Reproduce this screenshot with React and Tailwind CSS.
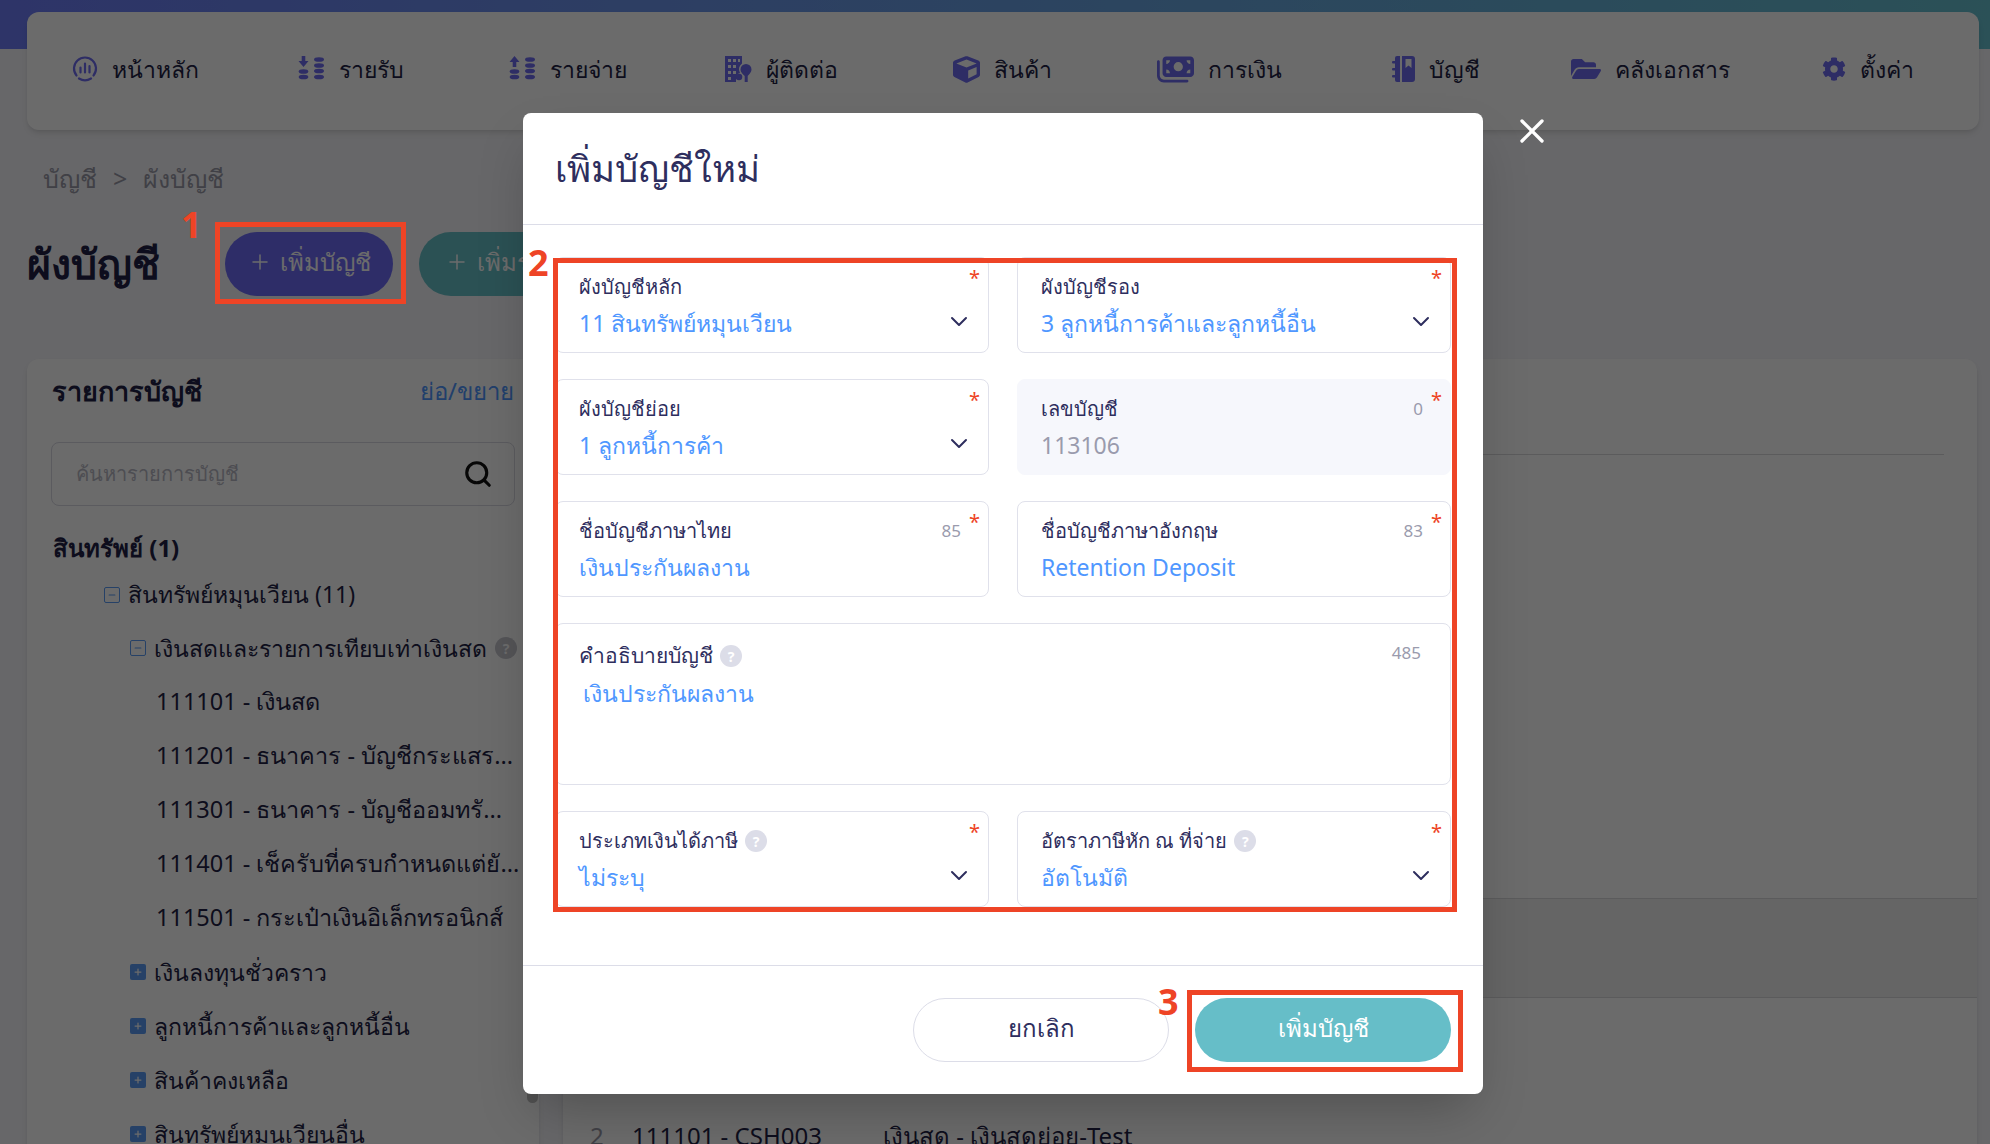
import React from 'react';
import { Search, Plus, Minus, X } from 'lucide-react';
import { FaCube, FaFolderOpen, FaCog } from 'react-icons/fa';
import { FaMoneyBills } from 'react-icons/fa6';

const HomeIcon = () => (
  <svg width="26" height="26" viewBox="0 0 26 26" fill="none" stroke="currentColor" strokeWidth="2.2" strokeLinecap="round">
    <path d="M4.500 19.500A11 11 0 1 1 21.500 19.500" />
    <path d="M7 22.500a11 11 0 0 0 12 0" />
    <path d="M8.500 11.500v5M13 7.500v9M17.500 10v6.500" />
  </svg>
);

const Coins = ({ up }) => (
  <svg width="27" height="26" viewBox="0 0 27 26" fill="currentColor">
    {up ? <path d="M5.500 0l5 6H7.300v5H3.700V6H.5z" /> : <path d="M3.700 0h3.600v5h3.200l-5 6-5-6h3.200z" />}
    {[13.500, 19].map((y, i) => <ellipse key={i} cx="5.500" cy={y + 2} rx="4.800" ry="2.300" />)}
    {[1.500, 7.500, 13, 19].map((y, i) => <ellipse key={i} cx="21" cy={y + 2} rx="5" ry="2.300" />)}
  </svg>
);

const ContactIcon = () => (
  <svg width="27" height="26" viewBox="0 0 27 26" fill="currentColor">
    <path fillRule="evenodd" d="M0 0h17v7.500a7 7 0 0 0-2 9.500 5.500 5.500 0 0 0-4 6V26H0zM3 3v3h3V3zm5 0v3h3V3zm5 0v3h2V3zM3 9v3h3V9zm5 0v3h3V9zM3 15v3h3v-3zm5 0v3h3v-3zM3 21v3h3v-3z" />
    <path d="M21 8a5.500 5.500 0 0 1 5.500 5.500c0 3-3 5.500-3.800 6.500V26h-3v-6c-1-1-4.200-3.500-4.200-6.500A5.500 5.500 0 0 1 21 8z" />
    <circle cx="14" cy="21" r="3.300" />
  </svg>
);

const BookIcon = () => (
  <svg width="23" height="26" viewBox="0 0 23 26" fill="currentColor">
    <path fillRule="evenodd" d="M3 2a2 2 0 0 1 2-2h3v26H5a2 2 0 0 1-2-2z" />
    <path fillRule="evenodd" d="M10 0h10a3 3 0 0 1 3 3v20a3 3 0 0 1-3 3H10zm3.500 3v9l3-2.500 3 2.500V3z" />
    <rect x="0" y="5" width="4" height="2.500" rx="1" />
    <rect x="0" y="12" width="4" height="2.500" rx="1" />
    <rect x="0" y="19" width="4" height="2.500" rx="1" />
  </svg>
);

const navItems = [
  { label: 'หน้าหลัก', width: 'w-[226px]', icon: <HomeIcon /> },
  { label: 'รายรับ', width: 'w-[211px]', icon: <Coins /> },
  { label: 'รายจ่าย', width: 'w-[216px]', icon: <Coins up /> },
  { label: 'ผู้ติดต่อ', width: 'w-[228px]', icon: <ContactIcon /> },
  { label: 'สินค้า', width: 'w-[204px]', icon: <FaCube size={27} /> },
  { label: 'การเงิน', width: 'w-[235px]', icon: <FaMoneyBills size={37} /> },
  { label: 'บัญชี', width: 'w-[179px]', icon: <BookIcon /> },
  { label: 'คลังเอกสาร', width: 'w-[251px]', icon: <FaFolderOpen size={30} /> },
  { label: 'ตั้งค่า', width: 'w-auto', icon: <FaCog size={24} /> },
];

const leaves = [
  '111101 - เงินสด',
  '111201 - ธนาคาร - บัญชีกระแสร...',
  '111301 - ธนาคาร - บัญชีออมทรั...',
  '111401 - เช็ครับที่ครบกำหนดแต่ยั...',
  '111501 - กระเป๋าเงินอิเล็กทรอนิกส์',
];

const closedGroups = ['เงินลงทุนชั่วคราว', 'ลูกหนี้การค้าและลูกหนี้อื่น', 'สินค้าคงเหลือ', 'สินทรัพย์หมุนเวียนอื่น'];

function TreeToggle({ open }) {
  if (open) {
    return (
      <span className="flex h-4 w-4 shrink-0 items-center justify-center rounded-[2px] border border-[#5b9cf5] text-[#5b9cf5]">
        <Minus size={10} strokeWidth={2.5} />
      </span>
    );
  }
  return (
    <span className="flex h-4 w-4 shrink-0 items-center justify-center rounded-[2px] bg-[#5b9cf5] text-white">
      <Plus size={10} strokeWidth={3} />
    </span>
  );
}

function HelpDot() {
  return (
    <span className="ml-[7px] flex h-[22px] w-[22px] shrink-0 items-center justify-center rounded-full bg-[#dcdde8] text-[14px] font-bold text-white">?</span>
  );
}

function Chevron() {
  return (
    <svg className="absolute right-[20px] top-[58px]" width="18" height="11" viewBox="0 0 18 11" fill="none" stroke="#2e2e5e" strokeWidth="2" strokeLinecap="round" strokeLinejoin="round">
      <path d="M2 2l7 7 7-7" />
    </svg>
  );
}

function Field({ label, value, help, count, select, required = true, disabled }) {
  return (
    <div className={`relative h-24 rounded-lg border px-[23px] pt-[15px] ${disabled ? 'border-[#f6f7fc] bg-[#f6f7fc]' : 'border-[#e0e1eb] bg-white'}`}>
      <div className="flex h-7 items-center text-[20px] font-medium text-[#2e2e5e]">
        {label}
        {help && <HelpDot />}
      </div>
      <div className={`mt-[4px] text-[23px] leading-9 ${disabled ? 'text-[#9a9bad]' : 'text-[#4f97ff]'}`}>{value}</div>
      {select && <Chevron />}
      {count !== undefined && <span className="absolute right-[27px] top-[17px] text-[17px] leading-6 text-[#9a9bad]">{count}</span>}
      {required && <span className="absolute right-[8px] top-[8px] text-[20px] leading-6 text-[#ee4426]">*</span>}
    </div>
  );
}

export default function App() {
  return (
    <div className="relative h-[1144px] w-full overflow-hidden bg-[#f5f5f9] font-['Noto_Sans',sans-serif] text-[#1f1f45]">
      <div className="h-[49px] bg-gradient-to-r from-[#6e7cf8] to-[#66c0cf]" />

      <nav className="relative ml-[27px] mr-[11px] -mt-[37px] flex h-[118px] items-start rounded-xl bg-white pl-[45px] pt-[37px] shadow-md">
        {navItems.map(item => (
          <div key={item.label} className={`flex shrink-0 items-center gap-[14px] text-[23px] leading-10 ${item.width}`}>
            <span className="text-[#6e6cf0]">{item.icon}</span>
            <span>{item.label}</span>
          </div>
        ))}
      </nav>

      <div className="pl-[27px] pr-[13px]">
        <div className="mt-[30px] flex gap-[16px] pl-[16px] text-[25px] leading-9 text-[#9a9aa8]">
          <span>บัญชี</span>
          <span>&gt;</span>
          <span>ผังบัญชี</span>
        </div>

        <div className="mt-[36px] flex h-16 items-center">
          <h1 className="w-[198px] text-[41px] font-bold text-[#1f1f45]">ผังบัญชี</h1>
          <button className="flex h-16 w-[168px] items-center justify-center gap-2 rounded-full bg-[#6e6cf8] pb-1 text-[24px] text-white">
            <Plus size={24} strokeWidth={1.5} />
            เพิ่มบัญชี
          </button>
          <button className="ml-[26px] flex h-16 w-[168px] items-center justify-center gap-2 rounded-full bg-[#66c0c8] pb-1 text-[24px] text-white">
            <Plus size={24} strokeWidth={1.5} />
            เพิ่มรหัส
          </button>
        </div>

        <div className="mt-[63px] flex gap-6">
          <aside className="relative h-[800px] w-[512px] shrink-0 rounded-t-xl bg-white shadow-md">
            <div className="flex h-[83px] items-start justify-between pl-[25px] pr-[25px] pt-[14px]">
              <h2 className="text-[27px] font-bold leading-9">รายการบัญชี</h2>
              <span className="text-[24px] leading-9 text-[#4f97ff]">ย่อ/ขยาย</span>
            </div>
            <div className="mx-[24px] flex h-16 items-center justify-between rounded-lg border border-[#d8d8e2] pl-6 pr-[21px]">
              <span className="text-[20px] text-[#b8b8c4]">ค้นหารายการบัญชี</span>
              <Search size={30} strokeWidth={2.5} className="text-[#111]" />
            </div>

            <div className="mt-[22px] pl-[26px] pr-2 text-[23px]">
              <div className="flex h-10 items-center text-[24px] font-bold">สินทรัพย์ (1)</div>
              <div className="flex h-[53px] items-center gap-2 pl-[51px]">
                <TreeToggle open />
                สินทรัพย์หมุนเวียน (11)
              </div>
              <div className="flex h-[54px] items-center gap-2 pl-[77px]">
                <TreeToggle open />
                <span className="whitespace-nowrap">เงินสดและรายการเทียบเท่าเงินสด</span>
                <span className="flex h-[22px] w-[22px] shrink-0 items-center justify-center rounded-full bg-[#c8c8d0] text-[14px] font-bold text-white">?</span>
              </div>
              {leaves.map(leaf => (
                <div key={leaf} className="flex h-[54px] items-center whitespace-nowrap pl-[103px] text-[23.500px]">{leaf}</div>
              ))}
              {closedGroups.map(group => (
                <div key={group} className="flex h-[54px] items-center gap-2 pl-[77px] whitespace-nowrap">
                  <TreeToggle />
                  {group}
                </div>
              ))}
            </div>
            <div className="absolute right-[1px] top-[600px] h-[144px] w-[11px] rounded-full bg-[#c0c0c0]" />
          </aside>

          <section className="relative h-[800px] flex-1 rounded-t-xl bg-white shadow-md">
            <div className="mx-[33px] h-[96px] border-b border-[#d8d8dc]" />
            <div className="mt-[443px] h-[100px] border-y border-[#d8d8dc] bg-[#f0f0f0]" />
            <div className="mt-[120px] flex items-center pl-[27px] text-[24px] leading-9">
              <span className="w-[42px] text-[#9a9aa8]">2</span>
              <span className="w-[251px]">111101 - CSH003</span>
              <span>เงินสด - เงินสดย่อย-Test</span>
            </div>
          </section>
        </div>
      </div>

      {/* dim layer and dialog */}
      <div className="absolute inset-0 bg-black/[0.58]" />

      <div className="absolute left-[523px] top-[113px] w-[960px] rounded-lg bg-white shadow-2xl">
        <div className="flex h-[112px] items-center border-b border-[#dcdde8] px-[32px]">
          <h2 className="text-[36.500px] font-medium text-[#2e2e5e]">เพิ่มบัญชีใหม่</h2>
        </div>

        <div className="grid h-[741px] grid-cols-2 content-start gap-x-7 gap-y-[26px] border-b border-[#dcdde8] px-[32px] pt-[32px]">
          <Field label="ผังบัญชีหลัก" value="11 สินทรัพย์หมุนเวียน" select />
          <Field label="ผังบัญชีรอง" value="3 ลูกหนี้การค้าและลูกหนี้อื่น" select />
          <Field label="ผังบัญชีย่อย" value="1 ลูกหนี้การค้า" select />
          <Field label="เลขบัญชี" value="113106" count="0" disabled />
          <Field label="ชื่อบัญชีภาษาไทย" value="เงินประกันผลงาน" count="85" />
          <Field label="ชื่อบัญชีภาษาอังกฤษ" value="Retention Deposit" count="83" />
          <div className="relative col-span-2 h-[162px] rounded-lg border border-[#e0e1eb] pl-[23px] pt-[18px]">
            <div className="flex h-7 items-center text-[21px] font-medium text-[#2e2e5e]">
              คำอธิบายบัญชี
              <HelpDot />
            </div>
            <div className="mt-[5px] pl-[4px] text-[23px] leading-9 text-[#4f97ff]">เงินประกันผลงาน</div>
            <span className="absolute right-[29px] top-[17px] text-[17px] leading-6 text-[#9a9bad]">485</span>
          </div>
          <Field label="ประเภทเงินได้ภาษี" value="ไม่ระบุ" help select />
          <Field label="อัตราภาษีหัก ณ ที่จ่าย" value="อัตโนมัติ" help select />
        </div>

        <div className="flex h-[128px] items-center justify-end gap-[26px] px-[32px]">
          <button className="h-16 w-[256px] rounded-full border border-[#dcdde8] bg-white pb-1 text-[24px] text-[#2e2e5e]">ยกเลิก</button>
          <button className="h-16 w-[256px] rounded-full bg-[#66bec8] pb-1 text-[24px] text-white">เพิ่มบัญชี</button>
        </div>
      </div>

      <X size={40} strokeWidth={2} className="absolute left-[1512px] top-[111px] text-white" />

      {/* red annotations on top of the screenshot */}
      <div className="absolute left-[215px] top-[222px] h-[82px] w-[191px] border-[5px] border-[#ee4426]" />
      <div className="absolute left-[553px] top-[258px] h-[654px] w-[904px] border-[5px] border-[#ee4426]" />
      <div className="absolute left-[1187px] top-[990px] h-[82px] w-[276px] border-[5px] border-[#ee4426]" />
      <span className="absolute left-[181px] top-[200px] text-[36px] font-bold leading-[50px] text-[#ee4426]">1</span>
      <span className="absolute left-[528px] top-[238px] text-[36px] font-bold leading-[50px] text-[#ee4426]">2</span>
      <span className="absolute left-[1158px] top-[977px] text-[36px] font-bold leading-[50px] text-[#ee4426]">3</span>
    </div>
  );
}
